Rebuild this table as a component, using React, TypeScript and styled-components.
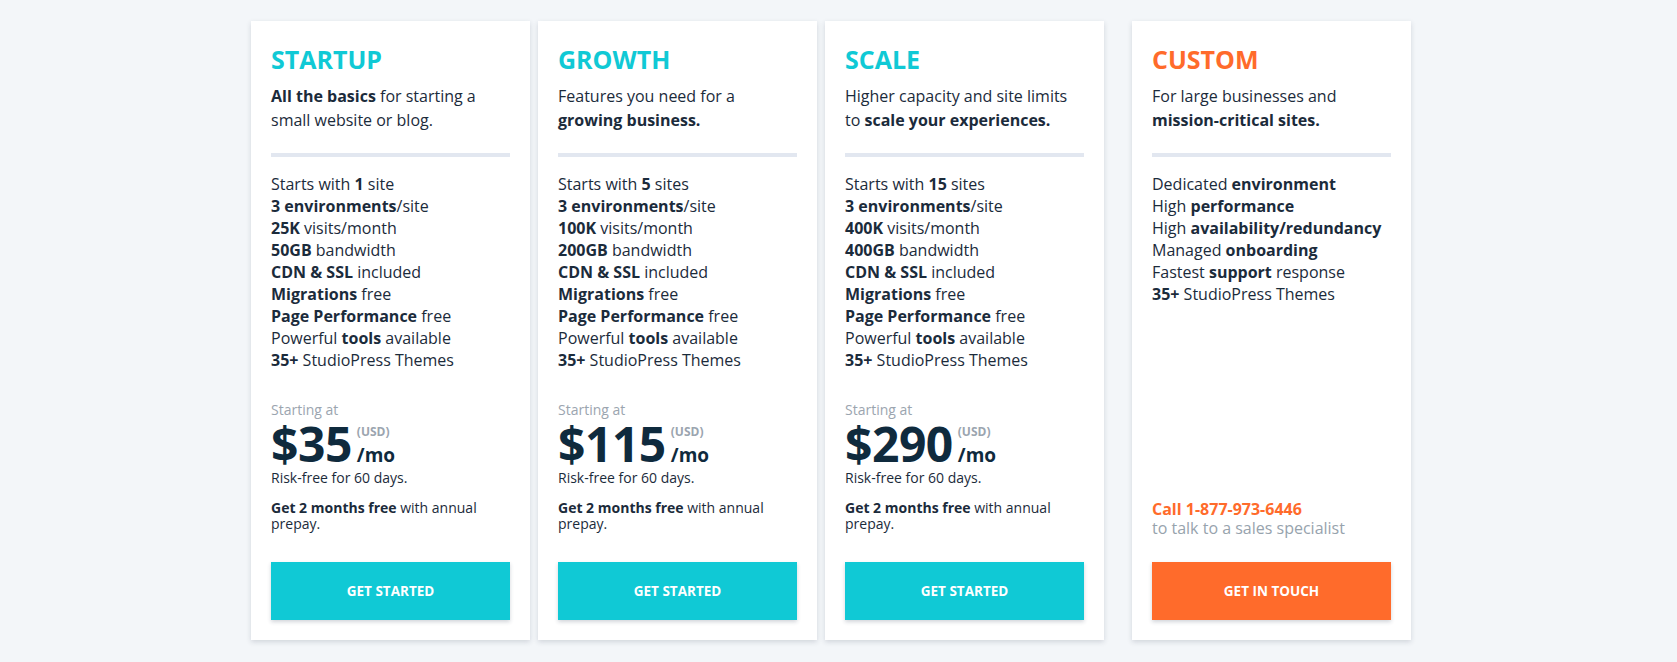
import React from "react";
import styled, { createGlobalStyle } from "styled-components";

const TEAL = "#10c9d5";
const ORANGE = "#ff6b2b";
const INK = "#1b2b3b";

const GlobalStyle = createGlobalStyle`
    html, body {
        margin: 0;
        padding: 0;
        background: #f3f6f9;
        font-family: "Open Sans", "Liberation Sans", sans-serif;
        color: ${INK};
    }
`;

const SPage = styled.div`
    display: flex;
    align-items: stretch;
    padding: 21px 0 22px 251px;
`;

const SCard = styled.div<{ $wide?: boolean }>`
    box-sizing: border-box;
    width: 279px;
    margin-left: ${(p) => (p.$wide ? "28px" : "8px")};
    padding: 22px 20px 20px;
    background: #fff;
    box-shadow: 0 2px 5px rgba(30, 45, 70, 0.16);
    display: flex;
    flex-direction: column;

    &:first-child {
        margin-left: 0;
    }
`;

const STitle = styled.h2<{ $color: string }>`
    margin: 0;
    font-size: 25px;
    line-height: 32px;
    font-weight: 700;
    color: ${(p) => p.$color};
`;

const SDesc = styled.p`
    margin: 9px 0 0;
    font-size: 16px;
    line-height: 24px;
`;

const SDivider = styled.hr`
    margin: 21px 0 0;
    height: 4px;
    border: 0;
    background: #e2e7f0;
`;

const SFeatures = styled.ul`
    list-style: none;
    margin: 16px 0 0;
    padding: 0;
    flex: 1;
    font-size: 16px;
    line-height: 22px;
`;

const SPricing = styled.div`
    margin: 29px 0 30px;
`;

const SStarting = styled.div`
    font-size: 14px;
    line-height: 20px;
    color: #9ba5af;
`;

const SPriceRow = styled.div`
    height: 48px;
    line-height: 48px;
    color: #0f2a3d;
    white-space: nowrap;
`;

const SAmount = styled.span`
    font-size: 48px;
    font-weight: 700;
    letter-spacing: -0.5px;
    vertical-align: baseline;
`;

const SUnit = styled.span`
    display: inline-block;
    margin-left: 5px;
    vertical-align: baseline;
`;

const SUsd = styled.span`
    display: block;
    font-size: 12px;
    line-height: 14px;
    font-weight: 700;
    color: #9ba5af;
    margin-bottom: 6px;
`;

const SMo = styled.span`
    display: block;
    font-size: 19px;
    line-height: 20px;
    font-weight: 700;
`;

const SRisk = styled.div`
    font-size: 14px;
    line-height: 20px;
`;

const SPrepay = styled.div`
    margin-top: 12px;
    font-size: 14px;
    line-height: 16px;
`;

const SContact = styled.div`
    margin: 29px 0 24px;
    font-size: 16px;
    line-height: 19px;
    color: #97a3ad;

    & b {
        color: ${ORANGE};
    }
`;

const SButton = styled.button<{ $color: string }>`
    height: 58px;
    width: 100%;
    border: 0;
    padding: 0;
    background: ${(p) => p.$color};
    color: #fff;
    font-family: "Open Sans", "Liberation Sans", sans-serif;
    font-size: 13.5px;
    font-weight: 700;
    text-transform: uppercase;
    box-shadow: 0 2px 4px rgba(30, 45, 70, 0.2);
    cursor: pointer;
`;

interface Plan {
    title: string;
    desc: React.ReactNode;
    features: React.ReactNode[];
    price: string;
}

const plans: Plan[] = [
    {
        title: "Startup",
        desc: <><b>All the basics</b> for starting a small website or blog.</>,
        features: [
            <>Starts with <b>1</b> site</>,
            <><b>3 environments</b>/site</>,
            <><b>25K</b> visits/month</>,
            <><b>50GB</b> bandwidth</>,
            <><b>CDN &amp; SSL</b> included</>,
            <><b>Migrations</b> free</>,
            <><b>Page Performance</b> free</>,
            <>Powerful <b>tools</b> available</>,
            <><b>35+</b> StudioPress Themes</>,
        ],
        price: "$35",
    },
    {
        title: "Growth",
        desc: <>Features you need for a <b>growing business.</b></>,
        features: [
            <>Starts with <b>5</b> sites</>,
            <><b>3 environments</b>/site</>,
            <><b>100K</b> visits/month</>,
            <><b>200GB</b> bandwidth</>,
            <><b>CDN &amp; SSL</b> included</>,
            <><b>Migrations</b> free</>,
            <><b>Page Performance</b> free</>,
            <>Powerful <b>tools</b> available</>,
            <><b>35+</b> StudioPress Themes</>,
        ],
        price: "$115",
    },
    {
        title: "Scale",
        desc: <>Higher capacity and site limits to <b>scale your experiences.</b></>,
        features: [
            <>Starts with <b>15</b> sites</>,
            <><b>3 environments</b>/site</>,
            <><b>400K</b> visits/month</>,
            <><b>400GB</b> bandwidth</>,
            <><b>CDN &amp; SSL</b> included</>,
            <><b>Migrations</b> free</>,
            <><b>Page Performance</b> free</>,
            <>Powerful <b>tools</b> available</>,
            <><b>35+</b> StudioPress Themes</>,
        ],
        price: "$290",
    },
];

const customFeatures = [
    <>Dedicated <b>environment</b></>,
    <>High <b>performance</b></>,
    <>High <b>availability/redundancy</b></>,
    <>Managed <b>onboarding</b></>,
    <>Fastest <b>support</b> response</>,
    <><b>35+</b> StudioPress Themes</>,
];

function App() {
    return (
        <>
            <GlobalStyle />
            <SPage>
                {plans.map((plan) => (
                    <SCard key={plan.title}>
                        <STitle $color={TEAL}>{plan.title.toUpperCase()}</STitle>
                        <SDesc>{plan.desc}</SDesc>
                        <SDivider />
                        <SFeatures>
                            {plan.features.map((f, i) => <li key={i}>{f}</li>)}
                        </SFeatures>
                        <SPricing>
                            <SStarting>Starting at</SStarting>
                            <SPriceRow>
                                <SAmount>{plan.price}</SAmount>
                                <SUnit>
                                    <SUsd>(USD)</SUsd>
                                    <SMo>/mo</SMo>
                                </SUnit>
                            </SPriceRow>
                            <SRisk>Risk-free for 60 days.</SRisk>
                            <SPrepay><b>Get 2 months free</b> with annual prepay.</SPrepay>
                        </SPricing>
                        <SButton $color={TEAL}>Get Started</SButton>
                    </SCard>
                ))}

                {/* custom plan */}
                <SCard $wide>
                    <STitle $color={ORANGE}>CUSTOM</STitle>
                    <SDesc>For large businesses and <b>mission-critical sites.</b></SDesc>
                    <SDivider />
                    <SFeatures>
                        {customFeatures.map((f, i) => <li key={i}>{f}</li>)}
                    </SFeatures>
                    <SContact>
                        <b>Call 1-877-973-6446</b>
                        <br />
                        to talk to a sales specialist
                    </SContact>
                    <SButton $color={ORANGE}>Get in touch</SButton>
                </SCard>
            </SPage>
        </>
    );
}

export default App;
